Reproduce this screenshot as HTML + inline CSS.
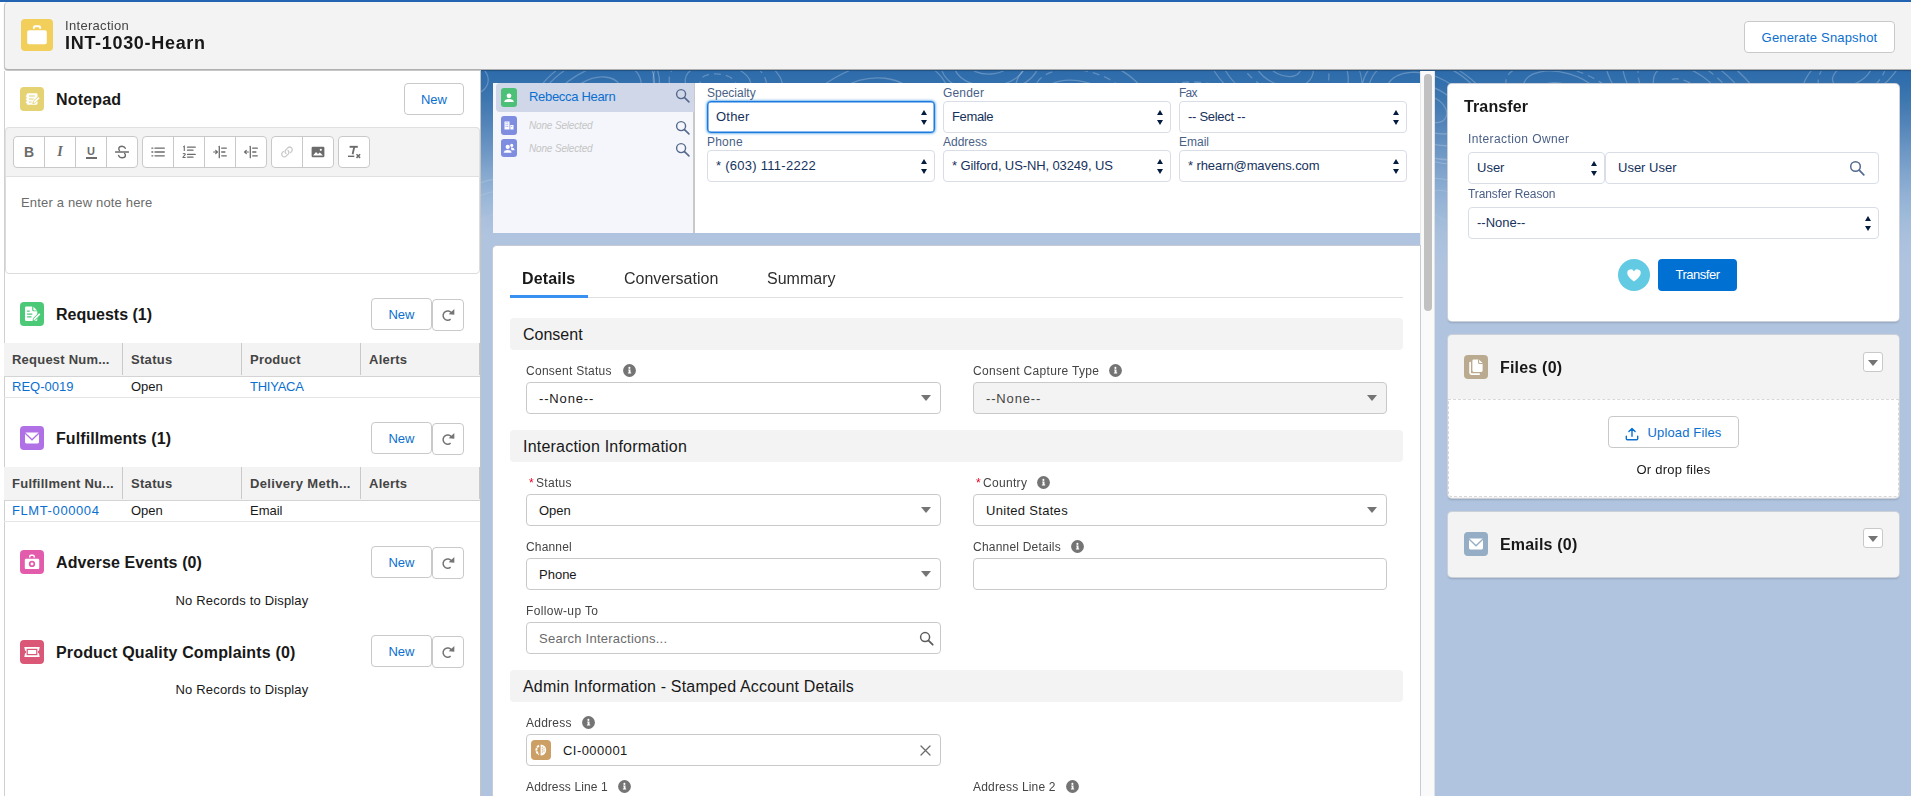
<!DOCTYPE html>
<html lang="en">
<head>
<meta charset="utf-8">
<title>INT-1030-Hearn | Interaction</title>
<style>
*{box-sizing:border-box;margin:0;padding:0}
html,body{width:1911px;height:796px;overflow:hidden;background:#fff}
body{font-family:"Liberation Sans",Arial,sans-serif;font-size:13px;color:#181818;position:relative}
.a{position:absolute}
.t{position:absolute;white-space:nowrap;line-height:22px;height:22px}
.b{font-weight:bold}
.lnk{color:#0b6fd0}
.btn{position:absolute;background:#fff;border:1px solid #c9c9c9;border-radius:4px;color:#0b6fd0;font-size:13px;text-align:center;white-space:nowrap}
.ic{position:absolute;border-radius:4px}
.ic svg{position:absolute;left:0;top:0;width:100%;height:100%}
/* left */
.h16{font-size:16px;font-weight:bold;color:#181818}
.th{position:absolute;top:0;height:32px;line-height:34px;font-weight:bold;color:#444;font-size:13px;padding-left:8px;border-left:1px solid #c9c9c9;white-space:nowrap}
.thead{position:absolute;left:4px;width:476px;height:34px;background:#f3f3f3;border-bottom:1px solid #d4d4d4}
.trow{position:absolute;left:4px;width:476px;height:21px;border-bottom:1px solid #e5e5e5}
.td{position:absolute;top:0;line-height:20px;font-size:13px;white-space:nowrap}
.tb{position:absolute;top:136px;height:32px;background:#fff;border:1px solid #c9c9c9;border-radius:4px}
.tb i{position:absolute;top:0;bottom:0;width:1px;background:#c9c9c9}
/* center form */
.lab{position:absolute;font-size:12px;color:#444;white-space:nowrap;line-height:18px;height:18px}
.lab em{color:#ea001e;font-style:normal;margin-right:2px}
.inp{position:absolute;height:32px;background:#fff;border:1px solid #c9c9c9;border-radius:4px;font-size:13px;line-height:32px;padding-left:12px;white-space:nowrap;color:#181818}
.inp.dis{background:#f3f3f3;color:#444}
.dn{position:absolute;right:9px;top:12px;width:0;height:0;border-left:5px solid transparent;border-right:5px solid transparent;border-top:6px solid #747474}
.sec{position:absolute;left:510px;width:893px;height:32px;background:#f3f3f3;border-radius:4px;font-size:16px;line-height:34px;padding-left:13px;color:#181818;white-space:nowrap}
/* account panel (salesforce sans look) */
.alab{position:absolute;font-size:12px;color:#4a5f86;white-space:nowrap;line-height:14px;height:14px}
.asel{position:absolute;height:32px;background:#fff;border:1px solid #d8dde6;border-radius:4px;font-size:13px;line-height:30px;padding-left:8px;color:#16325c;white-space:nowrap}
.ud{position:absolute;right:7px;top:7.5px;width:6px;height:15.5px}
.ud:before{content:"";position:absolute;left:0;top:0;border-left:3.2px solid transparent;border-right:3.2px solid transparent;border-bottom:5px solid #061c3f}
.ud:after{content:"";position:absolute;left:0;bottom:0;border-left:3.2px solid transparent;border-right:3.2px solid transparent;border-top:5px solid #061c3f}
.card{position:absolute;background:#fff;border-radius:4px;box-shadow:0 0 0 1px #ccd0d8,0 2px 2px rgba(0,0,0,.16)}
</style>
</head>
<body>
<!-- top blue bar -->
<div class="a" style="left:0;top:0;width:1911px;height:2px;background:#2264b1"></div>

<!-- page background -->
<div class="a" id="bg" style="left:481px;top:70px;width:1430px;height:726px;background:#b0c4df"></div>
<div class="a" id="bgGrad" style="left:1435px;top:70px;width:476px;height:200px;background:linear-gradient(to bottom,#2d6bab 0.5%,#3470ad 7.5%,#3e77b0 15.0%,#5485ba 27.5%,#6c96c4 40.0%,#82a6ce 52.5%,#95b3d6 65.0%,#9ebad9 72.5%,#a9c0dd 82.5%,#b0c4df 97.5%)"></div>
<div class="a" id="bgGradC" style="left:481px;top:70px;width:954px;height:200px;background:linear-gradient(to bottom,#2d6bab 0.5%,#3470ad 7.5%,#3e77b0 15.0%,#5485ba 27.5%,#6c96c4 40.0%,#86a9d0 52.5%,#9cb8d9 65.0%,#aac0dd 75.0%,#b0c4df 83.0%)"></div>
<svg class="a" id="swirl" style="left:481px;top:71px" width="1430" height="170" viewBox="0 0 1430 170"><defs><linearGradient id="fd" x1="0" y1="0" x2="0" y2="1"><stop offset="0" stop-color="#fff" stop-opacity="1"/><stop offset=".55" stop-color="#fff" stop-opacity=".8"/><stop offset="1" stop-color="#fff" stop-opacity="0"/></linearGradient><mask id="mk"><rect width="1430" height="170" fill="url(#fd)"/></mask></defs><g mask="url(#mk)" fill="none" stroke="#fff" stroke-opacity=".24" stroke-width="1.300"><ellipse cx="-47" cy="1" rx="24" ry="9" transform="rotate(11 -47 1)"/><ellipse cx="-47" cy="1" rx="37" ry="18" transform="rotate(11 -47 1)"/><ellipse cx="-47" cy="1" rx="55" ry="25" transform="rotate(11 -47 1)"/><ellipse cx="112" cy="31" rx="19" ry="14" transform="rotate(-31 112 31)"/><ellipse cx="112" cy="31" rx="32" ry="22" transform="rotate(-31 112 31)"/><ellipse cx="112" cy="31" rx="53" ry="31" transform="rotate(-31 112 31)"/><ellipse cx="112" cy="31" rx="67" ry="42" transform="rotate(-31 112 31)"/><ellipse cx="112" cy="31" rx="72" ry="47" transform="rotate(-31 112 31)"/><ellipse cx="237" cy="12" rx="18" ry="9" transform="rotate(6 237 12)" stroke-dasharray="7 5"/><ellipse cx="237" cy="12" rx="33" ry="19" transform="rotate(6 237 12)"/><ellipse cx="237" cy="12" rx="49" ry="30" transform="rotate(6 237 12)" stroke-dasharray="7 5"/><ellipse cx="237" cy="12" rx="65" ry="35" transform="rotate(6 237 12)"/><ellipse cx="383" cy="57" rx="21" ry="13" transform="rotate(-30 383 57)"/><ellipse cx="383" cy="57" rx="37" ry="23" transform="rotate(-30 383 57)"/><ellipse cx="383" cy="57" rx="56" ry="33" transform="rotate(-30 383 57)"/><ellipse cx="383" cy="57" rx="61" ry="46" transform="rotate(-30 383 57)"/><ellipse cx="383" cy="57" rx="93" ry="58" transform="rotate(-30 383 57)"/><ellipse cx="509" cy="-8" rx="21" ry="11" transform="rotate(-3 509 -8)"/><ellipse cx="509" cy="-8" rx="36" ry="23" transform="rotate(-3 509 -8)"/><ellipse cx="509" cy="-8" rx="49" ry="30" transform="rotate(-3 509 -8)"/><ellipse cx="602" cy="29" rx="22" ry="10" transform="rotate(14 602 29)" stroke-dasharray="7 5"/><ellipse cx="602" cy="29" rx="38" ry="18" transform="rotate(14 602 29)"/><ellipse cx="602" cy="29" rx="50" ry="29" transform="rotate(14 602 29)" stroke-dasharray="7 5"/><ellipse cx="602" cy="29" rx="69" ry="42" transform="rotate(14 602 29)"/><ellipse cx="721" cy="57" rx="15" ry="13" transform="rotate(11 721 57)"/><ellipse cx="721" cy="57" rx="30" ry="23" transform="rotate(11 721 57)" stroke-dasharray="7 5"/><ellipse cx="721" cy="57" rx="47" ry="30" transform="rotate(11 721 57)" stroke-dasharray="7 5"/><ellipse cx="721" cy="57" rx="57" ry="39" transform="rotate(11 721 57)"/><ellipse cx="721" cy="57" rx="68" ry="45" transform="rotate(11 721 57)" stroke-dasharray="7 5"/><ellipse cx="802" cy="-8" rx="19" ry="12" transform="rotate(26 802 -8)"/><ellipse cx="802" cy="-8" rx="32" ry="22" transform="rotate(26 802 -8)"/><ellipse cx="802" cy="-8" rx="49" ry="30" transform="rotate(26 802 -8)" stroke-dasharray="7 5"/><ellipse cx="802" cy="-8" rx="69" ry="45" transform="rotate(26 802 -8)"/><ellipse cx="802" cy="-8" rx="84" ry="52" transform="rotate(26 802 -8)"/><ellipse cx="949" cy="38" rx="18" ry="12" transform="rotate(29 949 38)"/><ellipse cx="949" cy="38" rx="35" ry="21" transform="rotate(29 949 38)"/><ellipse cx="949" cy="38" rx="49" ry="32" transform="rotate(29 949 38)"/><ellipse cx="949" cy="38" rx="66" ry="45" transform="rotate(29 949 38)"/><ellipse cx="949" cy="38" rx="73" ry="48" transform="rotate(29 949 38)"/><ellipse cx="1082" cy="24" rx="23" ry="11" transform="rotate(16 1082 24)"/><ellipse cx="1082" cy="24" rx="41" ry="22" transform="rotate(16 1082 24)"/><ellipse cx="1082" cy="24" rx="59" ry="27" transform="rotate(16 1082 24)" stroke-dasharray="7 5"/><ellipse cx="1208" cy="24" rx="24" ry="11" transform="rotate(34 1208 24)" stroke-dasharray="7 5"/><ellipse cx="1208" cy="24" rx="40" ry="23" transform="rotate(34 1208 24)"/><ellipse cx="1208" cy="24" rx="58" ry="31" transform="rotate(34 1208 24)" stroke-dasharray="7 5"/><ellipse cx="1208" cy="24" rx="75" ry="39" transform="rotate(34 1208 24)"/><ellipse cx="1208" cy="24" rx="96" ry="49" transform="rotate(34 1208 24)"/><ellipse cx="1371" cy="2" rx="21" ry="11" transform="rotate(-26 1371 2)"/><ellipse cx="1371" cy="2" rx="36" ry="23" transform="rotate(-26 1371 2)" stroke-dasharray="7 5"/><ellipse cx="1371" cy="2" rx="53" ry="27" transform="rotate(-26 1371 2)"/><ellipse cx="4" cy="135" rx="26" ry="11" transform="rotate(-25 4 135)"/><ellipse cx="4" cy="135" rx="41" ry="23" transform="rotate(-25 4 135)"/><ellipse cx="165" cy="98" rx="27" ry="14" transform="rotate(29 165 98)"/><ellipse cx="165" cy="98" rx="46" ry="26" transform="rotate(29 165 98)"/><ellipse cx="165" cy="98" rx="56" ry="33" transform="rotate(29 165 98)"/><ellipse cx="349" cy="137" rx="18" ry="13" transform="rotate(8 349 137)"/><ellipse cx="349" cy="137" rx="34" ry="24" transform="rotate(8 349 137)"/><ellipse cx="514" cy="96" rx="18" ry="10" transform="rotate(4 514 96)"/><ellipse cx="514" cy="96" rx="32" ry="23" transform="rotate(4 514 96)"/><ellipse cx="630" cy="148" rx="24" ry="13" transform="rotate(7 630 148)"/><ellipse cx="630" cy="148" rx="44" ry="25" transform="rotate(7 630 148)"/><ellipse cx="846" cy="106" rx="26" ry="11" transform="rotate(4 846 106)"/><ellipse cx="846" cy="106" rx="41" ry="21" transform="rotate(4 846 106)"/><ellipse cx="970" cy="137" rx="27" ry="14" transform="rotate(28 970 137)"/><ellipse cx="970" cy="137" rx="42" ry="25" transform="rotate(28 970 137)"/><ellipse cx="1130" cy="143" rx="26" ry="11" transform="rotate(-24 1130 143)"/><ellipse cx="1130" cy="143" rx="42" ry="21" transform="rotate(-24 1130 143)"/><ellipse cx="1130" cy="143" rx="58" ry="35" transform="rotate(-24 1130 143)"/><ellipse cx="1130" cy="143" rx="68" ry="45" transform="rotate(-24 1130 143)"/><ellipse cx="1288" cy="110" rx="28" ry="11" transform="rotate(9 1288 110)"/><ellipse cx="1288" cy="110" rx="47" ry="20" transform="rotate(9 1288 110)"/><ellipse cx="1288" cy="110" rx="59" ry="36" transform="rotate(9 1288 110)"/><ellipse cx="1288" cy="110" rx="73" ry="47" transform="rotate(9 1288 110)"/></g></svg>

<!-- header -->
<div class="a" id="hdr" style="left:4px;top:2px;width:1907px;height:68px;background:#f3f3f3;border-left:1px solid #c6c6c6;border-bottom:1px solid #b0b0b0;border-radius:4px 0 0 4px;box-shadow:0 1px 1px rgba(0,0,0,.25)"></div>
<div class="ic" style="left:21px;top:19px;width:32px;height:32px;background:#f2cf5b">
  <svg viewBox="0 0 32 32"><rect x="6.2" y="11.3" width="19.6" height="14" rx="1.8" fill="#fff"/><path d="M12.9 9.700V8.600a1.300 1.300 0 0 1 1.300-1.300h3.600a1.300 1.300 0 0 1 1.300 1.300v1.100" fill="none" stroke="#fff" stroke-width="2"/></svg>
</div>
<div class="t" style="letter-spacing:0.31px;left:65px;top:15px;font-size:13px;color:#444">Interaction</div>
<div class="t b" style="letter-spacing:0.69px;left:65px;top:32px;font-size:18px;color:#181818;line-height:22px">INT-1030-Hearn</div>
<div class="btn" style="letter-spacing:0.18px;left:1744px;top:21px;width:151px;height:32px;line-height:31px">Generate Snapshot</div>

<!-- LEFT PANEL -->
<div class="a" id="left" style="left:4px;top:71px;width:477px;height:725px;background:#fff;border-left:1px solid #d0d0d0;border-right:1px solid #c4c4c4"></div>
<!--LEFT-START-->
<!-- Notepad -->
<div class="ic" style="left:20px;top:87px;width:24px;height:24px;background:#e4d273">
  <svg viewBox="0 0 24 24"><path d="M8 6.2h8.2a1.3 1.3 0 0 1 1.3 1.3v2.2l-4.6 4.6-.5 2.6 2.6-.5 2.5-2.5v2.6a1.3 1.3 0 0 1-1.3 1.3H8a1.3 1.3 0 0 1-1.3-1.3v-.6h-.9v-1.2h.9v-1.9h-.9v-1.2h.9v-1.9h-.9V8.500h.9v-1a1.3 1.300 0 0 1 1.3-1.300z" fill="#fff"/><path d="M9 9h6M9 12h4.500M9 15h2.500" stroke="#e4d273" stroke-width="1.100"/><path d="M18.300 9.900l1.300 1.300-4.300 4.300-1.700.4.400-1.700z" fill="#fff"/></svg>
</div>
<div class="t h16" style="letter-spacing:0.16px;left:56px;top:89px">Notepad</div>
<div class="btn" style="left:404px;top:83px;width:60px;height:32px;line-height:32px">New</div>

<div class="a" style="left:5px;top:127px;width:475px;height:147px;border:1px solid #dcdcdc;border-radius:4px;background:#fff"></div>
<div class="a" style="left:5px;top:127px;width:475px;height:50px;border:1px solid #e0e0e0;border-radius:4px 4px 0 0;background:#f3f3f3"></div>
<!-- toolbar groups -->
<div class="tb" style="left:13px;width:125px"><i style="left:30px"></i><i style="left:61px"></i><i style="left:92px"></i>
  <span class="a b" style="left:0;width:30px;top:0;line-height:30px;text-align:center;font-size:14px;color:#6b6b6b">B</span>
  <span class="a b" style="left:31px;width:30px;top:0;line-height:30px;text-align:center;font-size:14px;color:#6b6b6b;font-family:'Liberation Serif',serif;font-style:italic">I</span>
  <span class="a b" style="left:62px;width:30px;top:-1px;line-height:30px;text-align:center;font-size:11px;color:#6b6b6b">U</span>
  <span class="a" style="left:72px;top:20px;width:11px;height:1.500px;background:#6b6b6b"></span>
  <svg class="a" style="left:101px;top:8px" width="14" height="14" viewBox="0 0 14 14"><path d="M10.300 3.300C9.700 1.900 8.300 1.200 7 1.200 5.200 1.200 3.800 2.200 3.800 3.800c0 .7.300 1.300.700 1.700M3.600 10.400c.500 1.500 1.900 2.400 3.500 2.400 1.900 0 3.300-1 3.300-2.600 0-.700-.300-1.300-.800-1.700" fill="none" stroke="#6b6b6b" stroke-width="1.400" stroke-linecap="round"/><path d="M.5 7h13" stroke="#6b6b6b" stroke-width="1.300" stroke-linecap="round"/></svg>
</div>
<div class="tb" style="left:142px;width:125px"><i style="left:30px"></i><i style="left:61px"></i><i style="left:92px"></i>
  <svg class="a" style="left:8px;top:8px" width="14" height="14" viewBox="0 0 14 14"><path d="M4 3.200h9.300M4 7h9.300M4 10.800h9.300" stroke="#6b6b6b" stroke-width="1.300" stroke-linecap="round"/><path d="M.9 3.200h.9M.9 7h.9M.9 10.800h.9" stroke="#6b6b6b" stroke-width="1.300" stroke-linecap="round"/></svg>
  <svg class="a" style="left:39px;top:8px" width="14" height="14" viewBox="0 0 14 14"><path d="M5.500 2.200h7.700M5.500 5.200h5.500M5.500 9.400h7.700M5.500 12.200h5.500" stroke="#6b6b6b" stroke-width="1.300" stroke-linecap="round"/><path d="M1.300 2l1-.7v4.600" fill="none" stroke="#6b6b6b" stroke-width="1.100"/><path d="M1 9c.3-.8 2.300-.8 2.300.3 0 1-2.300 1.700-2.300 3.200h2.600" fill="none" stroke="#6b6b6b" stroke-width="1.100"/></svg>
  <svg class="a" style="left:70px;top:8px" width="14" height="14" viewBox="0 0 14 14"><path d="M6.300 1.300v11.400" stroke="#6b6b6b" stroke-width="1.300" stroke-linecap="round"/><path d="M8.700 3.200h4.600M8.700 7h3.200M8.700 10.800h4.600" stroke="#6b6b6b" stroke-width="1.300" stroke-linecap="round"/><path d="M.6 7h3.500M2.700 5.300L4.400 7 2.700 8.700" fill="none" stroke="#6b6b6b" stroke-width="1.200" stroke-linecap="round" stroke-linejoin="round"/></svg>
  <svg class="a" style="left:101px;top:8px" width="14" height="14" viewBox="0 0 14 14"><path d="M6.300 1.300v11.400" stroke="#6b6b6b" stroke-width="1.300" stroke-linecap="round"/><path d="M8.700 3.200h4.600M8.700 7h3.200M8.700 10.800h4.600" stroke="#6b6b6b" stroke-width="1.300" stroke-linecap="round"/><path d="M4.400 7H.9M2.300 5.300L.6 7l1.700 1.700" fill="none" stroke="#6b6b6b" stroke-width="1.200" stroke-linecap="round" stroke-linejoin="round"/></svg>
</div>
<div class="tb" style="left:271px;width:63px"><i style="left:30px"></i>
  <svg class="a" style="left:8px;top:8px" width="14" height="14" viewBox="0 0 14 14"><path d="M6 8.600a2.600 2.600 0 0 1-.2-3.700l2-2a2.600 2.600 0 0 1 3.700 3.700l-1 1M8 5.400a2.600 2.600 0 0 1 .2 3.700l-2 2a2.600 2.600 0 0 1-3.700-3.700l1-1" fill="none" stroke="#c9c9c9" stroke-width="1.300" stroke-linecap="round"/></svg>
  <svg class="a" style="left:39px;top:8px" width="14" height="14" viewBox="0 0 14 14"><rect x=".6" y="1.800" width="12.800" height="10.400" rx="1.300" fill="#6b6b6b"/><path d="M2 10.600l3-3.600 2 2 1.800-1.600 3.200 3.200z" fill="#fff"/><circle cx="9.800" cy="4.800" r="1.100" fill="#fff"/></svg>
</div>
<div class="tb" style="left:338px;width:32px">
  <svg class="a" style="left:8px;top:8px" width="14" height="14" viewBox="0 0 14 14"><path d="M2.600 1.800h8.200" fill="none" stroke="#6b6b6b" stroke-width="1.900"/><path d="M7.300 1.800L5.600 9.300" fill="none" stroke="#6b6b6b" stroke-width="1.800"/><path d="M1 11.300h6.300" fill="none" stroke="#6b6b6b" stroke-width="1.400"/><path d="M9.500 9.300l3.600 3.600M13.100 9.300l-3.600 3.600" stroke="#6b6b6b" stroke-width="1.500"/></svg>
</div>
<div class="t" style="letter-spacing:0.17px;left:21px;top:192px;color:#6b6b6b">Enter a new note here</div>

<!-- Requests -->
<div class="ic" style="left:20px;top:302px;width:24px;height:24px;background:#4bc977">
  <svg viewBox="0 0 24 24"><path d="M6.300 4.600h5.900v3.400a1.300 1.300 0 0 0 1.300 1.300h3.800v8.500a1.300 1.300 0 0 1-1.300 1.300H6.300A1.300 1.300 0 0 1 5 17.800V5.900a1.300 1.300 0 0 1 1.300-1.300z" fill="#fff"/><path d="M13.400 4.800l3.700 3.600h-3.100a.6.600 0 0 1-.6-.6z" fill="#fff"/><path d="M7.100 9.200h2.600M7.100 12.100h5.200M7.100 14.900h4.400" stroke="#4bc977" stroke-width="1.200"/><path d="M19.200 11.200l1.200 1.200-5.300 5.300-1.700.5.500-1.700z" fill="#fff" stroke="#4bc977" stroke-width="1.600" stroke-linejoin="round"/><path d="M19.200 11.200l1.200 1.200-5.300 5.300-1.700.5.500-1.700z" fill="#fff"/></svg>
</div>
<div class="t h16" style="left:56px;top:304px">Requests (1)</div>
<div class="btn" style="left:371px;top:298px;width:61px;height:32px;line-height:32px">New</div>
<div class="btn" style="left:432px;top:299px;width:32px;height:32px"><svg class="a" style="left:9px;top:9px" width="13" height="13" viewBox="0 0 13 13"><path d="M9.500 4A4.600 4.600 0 1 0 8.600 10.200" fill="none" stroke="#747474" stroke-width="1.500"/><path d="M12.300 0v5.800L6.700 5.300z" fill="#747474"/></svg></div>
<div class="thead" style="top:343px"><span class="th" style="letter-spacing:0.22px;left:0;border-left:0">Request Num...</span><span class="th" style="letter-spacing:0.31px;left:118px">Status</span><span class="th" style="letter-spacing:0.23px;left:237px">Product</span><span class="th" style="letter-spacing:0.24px;left:356px">Alerts</span><span class="th" style="left:475px;padding:0"></span></div>
<div class="trow" style="top:377px"><span class="td lnk" style="letter-spacing:0.01px;left:8px">REQ-0019</span><span class="td" style="left:127px">Open</span><span class="td lnk" style="letter-spacing:-0.24px;left:246px">THIYACA</span></div>

<!-- Fulfillments -->
<div class="ic" style="left:20px;top:426px;width:24px;height:24px;background:#b070e6">
  <svg viewBox="0 0 24 24"><rect x="5" y="6.600" width="14" height="10.800" rx="1.300" fill="#fff"/><path d="M5.200 7.200l6.800 6.600 6.800-6.600" fill="none" stroke="#b070e6" stroke-width="1.300"/></svg>
</div>
<div class="t h16" style="letter-spacing:0.08px;left:56px;top:428px">Fulfillments (1)</div>
<div class="btn" style="left:371px;top:422px;width:61px;height:32px;line-height:32px">New</div>
<div class="btn" style="left:432px;top:423px;width:32px;height:32px"><svg class="a" style="left:9px;top:9px" width="13" height="13" viewBox="0 0 13 13"><path d="M9.500 4A4.600 4.600 0 1 0 8.600 10.200" fill="none" stroke="#747474" stroke-width="1.500"/><path d="M12.300 0v5.800L6.700 5.300z" fill="#747474"/></svg></div>
<div class="thead" style="top:467px"><span class="th" style="letter-spacing:0.26px;left:0;border-left:0">Fulfillment Nu...</span><span class="th" style="letter-spacing:0.31px;left:118px">Status</span><span class="th" style="letter-spacing:0.34px;left:237px">Delivery Meth...</span><span class="th" style="letter-spacing:0.24px;left:356px">Alerts</span><span class="th" style="left:475px;padding:0"></span></div>
<div class="trow" style="top:501px"><span class="td lnk" style="letter-spacing:0.6px;left:8px">FLMT-000004</span><span class="td" style="left:127px">Open</span><span class="td" style="left:246px">Email</span></div>

<!-- Adverse Events -->
<div class="ic" style="left:20px;top:550px;width:24px;height:24px;background:#e35cac">
  <svg viewBox="0 0 24 24"><rect x="4.800" y="8.800" width="14.400" height="10.300" rx="1.200" fill="#fff"/><path d="M9.700 7.600V6.700a1.400 1.400 0 0 1 1.400-1.400h1.800a1.400 1.400 0 0 1 1.400 1.400v.9" fill="none" stroke="#fff" stroke-width="1.500"/><circle cx="12" cy="13.900" r="2.300" fill="none" stroke="#e35cac" stroke-width="1.700"/></svg>
</div>
<div class="t h16" style="letter-spacing:0.11px;left:56px;top:552px">Adverse Events (0)</div>
<div class="btn" style="left:371px;top:546px;width:61px;height:32px;line-height:32px">New</div>
<div class="btn" style="left:432px;top:547px;width:32px;height:32px"><svg class="a" style="left:9px;top:9px" width="13" height="13" viewBox="0 0 13 13"><path d="M9.500 4A4.600 4.600 0 1 0 8.600 10.200" fill="none" stroke="#747474" stroke-width="1.500"/><path d="M12.300 0v5.800L6.700 5.300z" fill="#747474"/></svg></div>
<div class="t" style="letter-spacing:0.17px;left:4px;width:476px;text-align:center;top:590px">No Records to Display</div>

<!-- PQC -->
<div class="ic" style="left:20px;top:640px;width:24px;height:24px;background:#da5778">
  <svg viewBox="0 0 24 24"><path d="M4.300 6.900h15.400l-.7 3.500a1.700 1.700 0 0 0 0 3.200l.7 3.500H4.300l.7-3.500a1.700 1.700 0 0 0 0-3.200z" fill="#fff"/><rect x="7.200" y="9.400" width="9.600" height="5.200" fill="none" stroke="#da5778" stroke-width="1.200"/></svg>
</div>
<div class="t h16" style="letter-spacing:0.16px;left:56px;top:642px">Product Quality Complaints (0)</div>
<div class="btn" style="left:371px;top:635px;width:61px;height:32px;line-height:32px">New</div>
<div class="btn" style="left:432px;top:636px;width:32px;height:32px"><svg class="a" style="left:9px;top:9px" width="13" height="13" viewBox="0 0 13 13"><path d="M9.500 4A4.600 4.600 0 1 0 8.600 10.200" fill="none" stroke="#747474" stroke-width="1.500"/><path d="M12.300 0v5.800L6.700 5.300z" fill="#747474"/></svg></div>
<div class="t" style="letter-spacing:0.17px;left:4px;width:476px;text-align:center;top:679px">No Records to Display</div>
<!--LEFT-END-->

<!--CENTER-START-->
<!-- scrollbar -->
<div class="a" style="left:1420px;top:71px;width:15px;height:725px;background:#fafafa;border-left:1px solid #e8e8e8;border-right:1px solid #e0e0e0"></div>
<div class="a" style="left:1424px;top:74px;width:8px;height:237px;border-radius:4px;background:#c1c1c1"></div>

<!-- account panel -->
<div class="a" style="left:493px;top:83px;width:927px;height:150px;background:#fff"></div>
<div class="a" style="left:493px;top:83px;width:202px;height:150px;background:#f4f6fb;border-right:2px solid #c9c9c9"></div>
<div class="a" style="left:496px;top:83px;width:198px;height:29px;background:#d0d7e8;border-radius:4px 0 0 4px"></div>
<div class="ic" style="left:501px;top:88px;width:16px;height:19px;background:#4bc076;border-radius:3px">
  <svg viewBox="0 -1.5 16 19"><circle cx="8" cy="6.300" r="2.400" fill="#fff"/><path d="M3.200 12.600c0-2.200 2-3.200 4.800-3.200s4.800 1 4.800 3.200z" fill="#fff"/></svg>
</div>
<div class="t lnk" style="letter-spacing:-0.31px;left:529px;top:86px">Rebecca Hearn</div>
<svg class="a mag" style="left:675px;top:88px" width="15" height="15" viewBox="0 0 16 16"><circle cx="6.500" cy="6.500" r="4.800" fill="none" stroke="#54698d" stroke-width="1.500"/><path d="M10.200 10.200l4.600 4.600" stroke="#54698d" stroke-width="1.700" stroke-linecap="round"/></svg>
<div class="ic" style="left:501px;top:116px;width:16px;height:19px;background:#7f8de1;border-radius:3px">
  <svg viewBox="0 -1.5 16 19"><path d="M3.500 4h5v8h-5z" fill="#fff"/><path d="M9.300 7.500h3.200V12H9.300z" fill="#fff"/><path d="M4.600 5.400h.9M6.300 5.400h.9M4.600 7.200h.9M6.300 7.200h.9M4.600 9h.9M6.300 9h.9M10.300 9h.9" stroke="#7f8de1" stroke-width=".9"/></svg>
</div>
<div class="t" style="letter-spacing:-0.16px;left:529px;top:115px;font-size:10px;font-style:italic;color:#c4c4c4">None Selected</div>
<svg class="a mag" style="left:675px;top:119.500px" width="15" height="15" viewBox="0 0 16 16"><circle cx="6.500" cy="6.500" r="4.800" fill="none" stroke="#54698d" stroke-width="1.500"/><path d="M10.200 10.200l4.600 4.600" stroke="#54698d" stroke-width="1.700" stroke-linecap="round"/></svg>
<div class="ic" style="left:501px;top:139px;width:16px;height:18px;background:#7f8de1;border-radius:3px">
  <svg viewBox="0 -1 16 18"><circle cx="10.700" cy="5.400" r="1.600" fill="#fff"/><path d="M9.800 7.600c2.200-.3 3.700.8 3.700 2.700h-3z" fill="#fff"/><circle cx="6.700" cy="6.900" r="2.700" fill="#7f8de1"/><circle cx="6.700" cy="6.900" r="2.100" fill="#fff"/><path d="M2.600 13c0-2.200 1.700-3.300 4.100-3.300s4.100 1.100 4.100 3.300z" fill="#fff" stroke="#7f8de1" stroke-width=".5"/></svg>
</div>
<div class="t" style="letter-spacing:-0.16px;left:529px;top:138px;font-size:10px;font-style:italic;color:#c4c4c4">None Selected</div>
<svg class="a mag" style="left:675px;top:141.500px" width="15" height="15" viewBox="0 0 16 16"><circle cx="6.500" cy="6.500" r="4.800" fill="none" stroke="#54698d" stroke-width="1.500"/><path d="M10.200 10.200l4.600 4.600" stroke="#54698d" stroke-width="1.700" stroke-linecap="round"/></svg>

<div class="alab" style="left:707px;top:86px">Specialty</div>
<div class="asel" style="letter-spacing:0.22px;left:707px;top:101px;width:228px;border:1px solid #1b7ae0;box-shadow:0 0 3px #0176d3,inset 0 0 0 .5px #1b7ae0">Other<span class="ud"></span></div>
<div class="alab" style="letter-spacing:0.18px;left:943px;top:86px">Gender</div>
<div class="asel" style="letter-spacing:-0.36px;left:943px;top:101px;width:228px">Female<span class="ud"></span></div>
<div class="alab" style="letter-spacing:-0.74px;left:1179px;top:86px">Fax</div>
<div class="asel" style="letter-spacing:-0.29px;left:1179px;top:101px;width:228px">-- Select --<span class="ud"></span></div>
<div class="alab" style="letter-spacing:0.22px;left:707px;top:135px">Phone</div>
<div class="asel" style="letter-spacing:0.27px;left:707px;top:150px;width:228px">* (603) 111-2222<span class="ud"></span></div>
<div class="alab" style="left:943px;top:135px">Address</div>
<div class="asel" style="letter-spacing:-0.12px;left:943px;top:150px;width:228px">* Gilford, US-NH, 03249, US<span class="ud"></span></div>
<div class="alab" style="left:1179px;top:135px">Email</div>
<div class="asel" style="letter-spacing:-0.09px;left:1179px;top:150px;width:228px">* rhearn@mavens.com<span class="ud"></span></div>

<!-- main card -->
<div class="a" style="left:493px;top:246px;width:927px;height:560px;background:#fff;border-radius:4px 0 0 0;box-shadow:0 0 0 1px #c6cbd6"></div>
<div class="a" style="left:510px;top:297px;width:893px;height:1px;background:#e0e0e0"></div>
<div class="a" style="left:510px;top:295px;width:78px;height:3px;background:#3890f0"></div>
<div class="t b" style="letter-spacing:0.12px;left:522px;top:268px;font-size:16px;color:#181818">Details</div>
<div class="t" style="left:624px;top:268px;font-size:16px;color:#2e2e2e">Conversation</div>
<div class="t" style="left:767px;top:268px;font-size:16px;color:#2e2e2e">Summary</div>

<div class="sec" style="top:318px">Consent</div>
<div class="lab" style="letter-spacing:0.27px;left:526px;top:362px">Consent Status</div><svg class="a" style="left:622.5px;top:363.5px" width="13" height="13" viewBox="0 0 13 13"><circle cx="6.500" cy="6.500" r="6.400" fill="#747474"/><circle cx="6.400" cy="3.900" r="1.050" fill="#fff"/><path d="M5.200 5.500h2.300v3h.7v1H4.900v-1h.8V6.500h-.5z" fill="#fff"/></svg>
<div class="inp" style="letter-spacing:0.84px;left:526px;top:382px;width:415px">--None--<span class="dn"></span></div>
<div class="lab" style="letter-spacing:0.32px;left:973px;top:362px">Consent Capture Type</div><svg class="a" style="left:1108.5px;top:363.5px" width="13" height="13" viewBox="0 0 13 13"><circle cx="6.500" cy="6.500" r="6.400" fill="#747474"/><circle cx="6.400" cy="3.900" r="1.050" fill="#fff"/><path d="M5.200 5.500h2.300v3h.7v1H4.900v-1h.8V6.500h-.5z" fill="#fff"/></svg>
<div class="inp dis" style="letter-spacing:0.84px;left:973px;top:382px;width:414px">--None--<span class="dn"></span></div>

<div class="sec" style="letter-spacing:0.21px;top:430px">Interaction Information</div>
<div class="lab" style="left:529px;top:474px;letter-spacing:0.31px"><em>*</em>Status</div>
<div class="inp" style="left:526px;top:494px;width:415px">Open<span class="dn"></span></div>
<div class="lab" style="left:976px;top:474px;letter-spacing:0.32px"><em>*</em>Country</div><svg class="a" style="left:1036.5px;top:475.5px" width="13" height="13" viewBox="0 0 13 13"><circle cx="6.500" cy="6.500" r="6.400" fill="#747474"/><circle cx="6.400" cy="3.900" r="1.050" fill="#fff"/><path d="M5.200 5.500h2.300v3h.7v1H4.900v-1h.8V6.500h-.5z" fill="#fff"/></svg>
<div class="inp" style="letter-spacing:0.3px;left:973px;top:494px;width:414px">United States<span class="dn"></span></div>
<div class="lab" style="letter-spacing:0.16px;left:526px;top:538px">Channel</div>
<div class="inp" style="left:526px;top:558px;width:415px">Phone<span class="dn"></span></div>
<div class="lab" style="letter-spacing:0.21px;left:973px;top:538px">Channel Details</div><svg class="a" style="left:1070.5px;top:539.5px" width="13" height="13" viewBox="0 0 13 13"><circle cx="6.500" cy="6.500" r="6.400" fill="#747474"/><circle cx="6.400" cy="3.900" r="1.050" fill="#fff"/><path d="M5.200 5.500h2.300v3h.7v1H4.900v-1h.8V6.500h-.5z" fill="#fff"/></svg>
<div class="inp" style="left:973px;top:558px;width:414px"></div>
<div class="lab" style="letter-spacing:0.38px;left:526px;top:602px">Follow-up To</div>
<div class="inp" style="letter-spacing:0.25px;left:526px;top:622px;width:415px;color:#6b6b6b">Search Interactions...<svg class="a" style="right:6px;top:8px" width="15" height="15" viewBox="0 0 16 16"><circle cx="6.500" cy="6.500" r="4.800" fill="none" stroke="#5c5c5c" stroke-width="1.600"/><path d="M10.200 10.200l4.400 4.400" stroke="#5c5c5c" stroke-width="1.900" stroke-linecap="round"/></svg></div>

<div class="sec" style="letter-spacing:0.19px;top:670px">Admin Information - Stamped Account Details</div>
<div class="lab" style="letter-spacing:0.25px;left:526px;top:714px">Address</div><svg class="a" style="left:581.5px;top:715.5px" width="13" height="13" viewBox="0 0 13 13"><circle cx="6.500" cy="6.500" r="6.400" fill="#747474"/><circle cx="6.400" cy="3.900" r="1.050" fill="#fff"/><path d="M5.200 5.500h2.300v3h.7v1H4.900v-1h.8V6.500h-.5z" fill="#fff"/></svg>
<div class="inp" style="letter-spacing:0.45px;left:526px;top:734px;width:415px;padding-left:36px">CI-000001
  <span class="ic" style="left:4px;top:5px;width:20px;height:20px;background:#cc9f64"><svg viewBox="0 0 20 20"><path d="M8 5.600A5 5 0 0 0 8 14.400" fill="none" stroke="#fff" stroke-width="1.900" stroke-dasharray="2.600 .7"/><path d="M9.600 4.400A5.600 5.600 0 0 1 9.600 15.600z" fill="#fff"/><path d="M11.300 6.500v7M13 7.800v4.400" stroke="#cc9f64" stroke-width=".8" stroke-dasharray="1.600 .8"/></svg></span>
  <svg class="a" style="right:9px;top:10px" width="11" height="11" viewBox="0 0 11 11"><path d="M1 1l9 9M10 1l-9 9" stroke="#6b6b6b" stroke-width="1.300" stroke-linecap="round"/></svg>
</div>
<div class="lab" style="letter-spacing:0.13px;left:526px;top:778px">Address Line 1</div><svg class="a" style="left:617.5px;top:779.5px" width="13" height="13" viewBox="0 0 13 13"><circle cx="6.500" cy="6.500" r="6.400" fill="#747474"/><circle cx="6.400" cy="3.900" r="1.050" fill="#fff"/><path d="M5.200 5.500h2.300v3h.7v1H4.900v-1h.8V6.500h-.5z" fill="#fff"/></svg>
<div class="lab" style="letter-spacing:0.19px;left:973px;top:778px">Address Line 2</div><svg class="a" style="left:1065.5px;top:779.5px" width="13" height="13" viewBox="0 0 13 13"><circle cx="6.500" cy="6.500" r="6.400" fill="#747474"/><circle cx="6.400" cy="3.900" r="1.050" fill="#fff"/><path d="M5.200 5.500h2.300v3h.7v1H4.900v-1h.8V6.500h-.5z" fill="#fff"/></svg>
<!--CENTER-END-->

<!--RIGHT-START-->
<!-- Transfer card -->
<div class="card" style="left:1448px;top:84px;width:451px;height:237px"></div>
<div class="t b" style="letter-spacing:0.12px;left:1464px;top:96px;font-size:16px;color:#181818">Transfer</div>
<div class="alab" style="letter-spacing:0.4px;left:1468px;top:132px">Interaction Owner</div>
<div class="asel" style="left:1468px;top:152px;width:137px">User<span class="ud"></span></div>
<div class="asel" style="left:1605px;top:152px;width:274px;padding-left:12px">User User<svg class="a" style="right:13px;top:7px" width="16" height="16" viewBox="0 0 16 16"><circle cx="6.500" cy="6.500" r="4.800" fill="none" stroke="#54698d" stroke-width="1.500"/><path d="M10.200 10.200l4.600 4.600" stroke="#54698d" stroke-width="1.700" stroke-linecap="round"/></svg></div>
<div class="alab" style="letter-spacing:-0.1px;left:1468px;top:187px">Transfer Reason</div>
<div class="asel" style="left:1468px;top:207px;width:411px">--None--<span class="ud"></span></div>
<div class="a" style="left:1618px;top:259px;width:32px;height:32px;border-radius:50%;background:#62cae3"><svg class="a" style="left:8px;top:9px" width="16" height="15" viewBox="0 0 16 15"><path d="M8 13.600C4.500 10.800 1.300 8.300 1.300 5.100A3.500 3.500 0 0 1 8 3.400a3.500 3.500 0 0 1 6.700 1.700c0 3.200-3.200 5.700-6.700 8.500z" fill="#fff"/></svg></div>
<div class="a" style="letter-spacing:-0.49px;left:1658px;top:259px;width:79px;height:32px;border-radius:4px;background:#0070d2;color:#fff;font-size:13px;line-height:32px;text-align:center">Transfer</div>

<!-- Files card -->
<div class="card" style="left:1448px;top:335px;width:451px;height:163px;background:#f3f3f3"></div>
<div class="a" style="left:1448px;top:399px;width:451px;height:98px;background:#fff;border:1px dashed #d8d8d8;border-radius:0 0 4px 4px"></div>
<div class="ic" style="left:1464px;top:355px;width:24px;height:24px;background:#baab90">
  <svg viewBox="0 0 24 24"><path d="M9.700 4.400h5.200l3.700 3.700v7.500a1.300 1.300 0 0 1-1.300 1.300H9.700a1.300 1.300 0 0 1-1.300-1.300V5.700a1.300 1.300 0 0 1 1.300-1.300z" fill="#fff"/><path d="M14.600 4.300v3.300a.9.900 0 0 0 .9.900h3.300" fill="none" stroke="#baab90" stroke-width="1.100"/><path d="M6.100 7.500v10.300a1.300 1.300 0 0 0 1.300 1.300h7.800" fill="none" stroke="#fff" stroke-width="1.700" stroke-linecap="round"/></svg>
</div>
<div class="t h16" style="letter-spacing:0.2px;left:1500px;top:357px">Files (0)</div>
<div class="btn" style="left:1863px;top:352px;width:20px;height:20px;border-radius:3px"><span class="dn" style="left:4px;top:7px;right:auto"></span></div>
<div class="btn" style="letter-spacing:0.14px;left:1608px;top:416px;width:131px;height:32px;line-height:32px;padding-left:22px">Upload Files<svg class="a" style="left:16px;top:10px" width="14" height="14" viewBox="0 0 14 14"><path d="M7 9.200V1.600M3.900 4.400L7 1.400l3.100 3" fill="none" stroke="#0b6fd0" stroke-width="1.400" stroke-linecap="round" stroke-linejoin="round"/><path d="M1.300 9.200v2.600a1 1 0 0 0 1 1h9.400a1 1 0 0 0 1-1V9.200" fill="none" stroke="#0b6fd0" stroke-width="1.400" stroke-linecap="round"/></svg></div>
<div class="t" style="letter-spacing:0.26px;left:1448px;width:451px;text-align:center;top:459px">Or drop files</div>

<!-- Emails card -->
<div class="card" style="left:1448px;top:512px;width:451px;height:65px;background:#f3f3f3"></div>
<div class="ic" style="left:1464px;top:532px;width:24px;height:24px;background:#95aec5">
  <svg viewBox="0 0 24 24"><rect x="5" y="6.600" width="14" height="10.800" rx="1.300" fill="#fff"/><path d="M5.200 7.200l6.800 6.600 6.800-6.600" fill="none" stroke="#95aec5" stroke-width="1.300"/></svg>
</div>
<div class="t h16" style="letter-spacing:0.18px;left:1500px;top:534px">Emails (0)</div>
<div class="btn" style="left:1863px;top:528px;width:20px;height:20px;border-radius:3px"><span class="dn" style="left:4px;top:7px;right:auto"></span></div>
<!--RIGHT-END-->
</body>
</html>
